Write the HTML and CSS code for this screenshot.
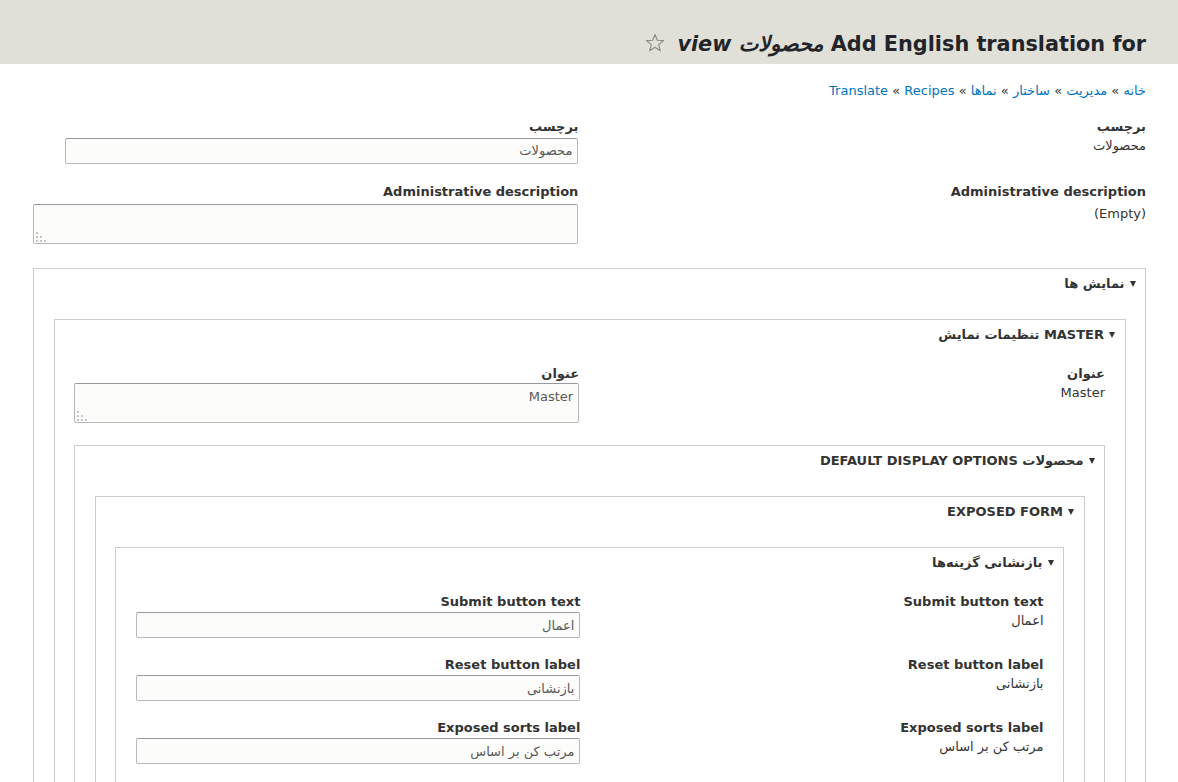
FILE: index.html
```html
<!DOCTYPE html>
<html lang="fa" dir="rtl">
<head>
<meta charset="utf-8">
<title>Add English translation</title>
<link rel="stylesheet" href="styles.css">
</head>
<body>
<header class="page-header">
  <h1 class="page-title">Add English translation for <em>محصولات view</em> <span class="shortcut"><svg width="20" height="20" viewBox="0 0 20 20"><polygon points="10,1.5 12.3,7.3 18.6,7.6 13.7,11.6 15.3,17.8 10,14.3 4.7,17.8 6.3,11.6 1.4,7.6 7.7,7.3" fill="none" stroke="#8a8a80" stroke-width="1.1" stroke-linejoin="round"/></svg></span></h1>
</header>
<main class="page">
  <nav class="breadcrumb"><a href="#">خانه</a> » <a href="#">مدیریت</a> » <a href="#">ساختار</a> » <a href="#">نماها</a> » <a href="#">Recipes</a> » <a href="#">Translate</a></nav>
  <form class="tform">
    <div class="set top">
      <div class="src"><div class="lbl">برچسب</div><div class="val">محصولات</div></div>
      <div class="tr"><label class="lbl">برچسب</label><input class="text fixed" type="text" value="محصولات"></div>
    </div>
    <div class="set top">
      <div class="src"><div class="lbl">Administrative description</div><div class="val empty">(Empty)</div></div>
      <div class="tr"><label class="lbl lbl-ta">Administrative description</label><div class="area-wrap"><textarea class="area"></textarea><span class="grip"></span></div></div>
    </div>
    <details class="box first" open>
      <summary class="sum"><span class="tri"></span><span class="sum-text">نمایش ها</span></summary>
      <div class="wrap">
        <details class="box" open>
          <summary class="sum"><span class="tri"></span><span class="sum-text">Master تنظیمات نمایش</span></summary>
          <div class="wrap">
            <div class="set">
              <div class="src"><div class="lbl">عنوان</div><div class="val">Master</div></div>
              <div class="tr"><label class="lbl lbl-tight">عنوان</label><div class="area-wrap"><textarea class="area">Master</textarea><span class="grip"></span></div></div>
            </div>
            <details class="box" open>
              <summary class="sum"><span class="tri"></span><span class="sum-text">محصولات Default display options</span></summary>
              <div class="wrap">
                <details class="box" open>
                  <summary class="sum"><span class="tri"></span><span class="sum-text">Exposed form</span></summary>
                  <div class="wrap">
                    <details class="box" open>
                      <summary class="sum"><span class="tri"></span><span class="sum-text">بازنشانی گزینه‌ها</span></summary>
                      <div class="wrap">
                        <div class="set">
                          <div class="src"><div class="lbl">Submit button text</div><div class="val">اعمال</div></div>
                          <div class="tr"><label class="lbl">Submit button text</label><input class="text" type="text" value="اعمال"></div>
                        </div>
                        <div class="set">
                          <div class="src"><div class="lbl">Reset button label</div><div class="val">بازنشانی</div></div>
                          <div class="tr"><label class="lbl">Reset button label</label><input class="text" type="text" value="بازنشانی"></div>
                        </div>
                        <div class="set">
                          <div class="src"><div class="lbl">Exposed sorts label</div><div class="val">مرتب کن بر اساس</div></div>
                          <div class="tr"><label class="lbl">Exposed sorts label</label><input class="text" type="text" value="مرتب کن بر اساس"></div>
                        </div>
                      </div>
                    </details>
                  </div>
                </details>
              </div>
            </details>
          </div>
        </details>
      </div>
    </details>
  </form>
</main>
</body>
</html>
```
FILE: styles.css
```css
html, body {
  margin: 0;
  padding: 0;
  background: #fff;
}
body {
  font-family: "DejaVu Sans", "Noto Sans", sans-serif;
  font-size: 13px;
  color: #333;
}
.page-header {
  background: #e0e0d8;
  height: 64px;
  padding: 0 32px 0 33px;
  box-sizing: border-box;
}
.page-title {
  margin: 0;
  padding-top: 31px;
  font-size: 20.8px;
  line-height: 26px;
  font-weight: bold;
  color: #232429;
}
.page-title em {
  font-style: italic;
}
.shortcut {
  display: inline-block;
  vertical-align: -2px;
  margin-right: 5px;
}
.shortcut svg {
  display: block;
}
.page {
  display: block;
  padding: 0 32px 40px 33px;
}
.breadcrumb {
  margin-top: 17px;
  font-size: 13px;
  line-height: 18px;
  padding-top: 1px;
  height: 17px;
  color: #333;
}
.breadcrumb a {
  color: #0074bd;
  text-decoration: none;
  unicode-bidi: isolate;
}
.tform {
  margin-top: 19px;
  display: flex;
  flex-direction: column;
}
.set {
  display: flex;
  justify-content: space-between;
  align-items: flex-start;
  margin-bottom: 17.5px;
}
.set.top {
  margin-bottom: 19.5px;
}
.src, .tr {
  width: 49%;
}
.lbl {
  display: block;
  font-weight: bold;
  line-height: 18px;
  color: #333;
}
.tr .lbl {
  margin-bottom: 1.5px;
}
.tr .lbl-ta {
  margin-bottom: 3px;
}
.tr .lbl-tight {
  margin-bottom: 0.5px;
}
.val {
  line-height: 18px;
  margin-top: 1px;
  color: #333;
}
.val.empty {
  margin-top: 4px;
}
.text, .area {
  display: block;
  box-sizing: border-box;
  font-family: "DejaVu Sans", sans-serif;
  font-size: 13px;
  color: #595959;
  background: #fcfcfa;
  border: 1px solid #b8b8b8;
  border-top-color: #999;
  border-radius: 2px;
  padding: 0 5px;
  margin: 0;
  direction: rtl;
}
.text {
  width: 100%;
  height: 26px;
}
.text.fixed {
  width: 513px;
  max-width: 100%;
}
.area-wrap {
  position: relative;
}
.area {
  width: 100%;
  height: 40px;
  padding-top: 5px;
  line-height: 16px;
  resize: none;
  overflow: hidden;
}
.grip {
  position: absolute;
  left: 3px;
  bottom: 2px;
  width: 2px;
  height: 2px;
  background: #c4c4c4;
  box-shadow: 0 -4px 0 #c4c4c4, 0 -8px 0 #c4c4c4, 4px 0 0 #c4c4c4, 4px -4px 0 #c4c4c4, 8px 0 0 #c4c4c4;
}
.box {
  border: 1px solid #ccc;
  margin: 5.5px 0 0 0;
  padding: 0;
}
.box.first {
  margin-top: 0.5px;
}
.set + .box {
  margin-top: 4.5px;
}
.sum {
  list-style: none;
  display: flex;
  align-items: center;
  padding: 7.5px 9.5px 0 11px;
  height: 14px;
  line-height: 14px;
  font-weight: bold;
  text-transform: uppercase;
  color: #333;
  cursor: pointer;
}
.sum::-webkit-details-marker {
  display: none;
}
.tri {
  width: 0;
  height: 0;
  border-left: 3.5px solid transparent;
  border-right: 3.5px solid transparent;
  border-top: 6px solid #333;
  margin-left: 5px;
  margin-top: 1px;
}
.wrap {
  display: flex;
  flex-direction: column;
  padding: 23px 19.5px 19px 19.5px;
}
```
